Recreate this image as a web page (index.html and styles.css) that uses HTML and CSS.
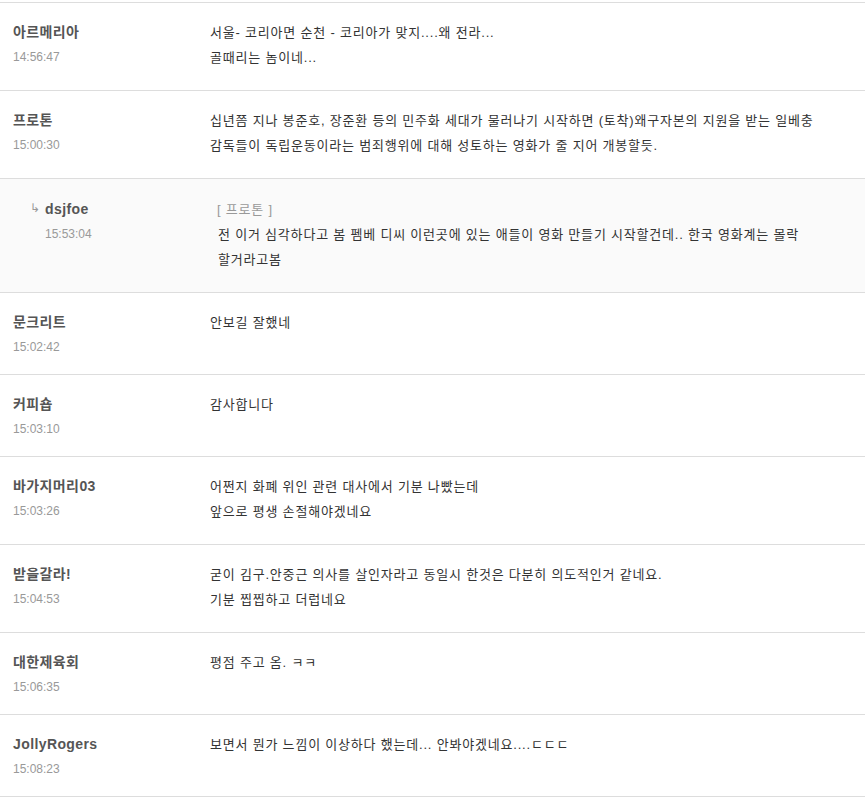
FILE: index.html
```html
<!DOCTYPE html>
<html lang="ko">
<head>
  <meta charset="UTF-8">
  <title>댓글</title>
  <link rel="stylesheet" href="styles.css">
</head>
<body>

  <ul class="comments">
    <li class="comment">
      <div class="author">
        <div class="name">아르메리아</div>
        <div class="time">14:56:47</div>
      </div>
      <div class="text">서울- 코리아면 순천 - 코리아가 맞지....왜 전라...<br>골때리는 놈이네...</div>
    </li>

    <li class="comment">
      <div class="author">
        <div class="name">프로톤</div>
        <div class="time">15:00:30</div>
      </div>
      <div class="text">십년쯤 지나 봉준호, 장준환 등의 민주화 세대가 물러나기 시작하면 (토착)왜구자본의 지원을 받는 일베충 감독들이 독립운동이라는 범죄행위에 대해 성토하는 영화가 줄 지어 개봉할듯.</div>
    </li>

    <li class="comment reply">
      <div class="author">
        <span class="arrow">↳</span>
        <div>
          <div class="name">dsjfoe</div>
          <div class="time">15:53:04</div>
        </div>
      </div>
      <div class="text">
        <div class="to">[ 프로톤 ]</div>
        전 이거 심각하다고 봄 펨베 디씨 이런곳에 있는 애들이 영화 만들기 시작할건데.. 한국 영화계는 몰락 할거라고봄
      </div>
    </li>

    <li class="comment">
      <div class="author">
        <div class="name">문크리트</div>
        <div class="time">15:02:42</div>
      </div>
      <div class="text">안보길 잘했네</div>
    </li>

    <li class="comment">
      <div class="author">
        <div class="name">커피숍</div>
        <div class="time">15:03:10</div>
      </div>
      <div class="text">감사합니다</div>
    </li>

    <li class="comment">
      <div class="author">
        <div class="name">바가지머리03</div>
        <div class="time">15:03:26</div>
      </div>
      <div class="text">어쩐지 화폐 위인 관련 대사에서 기분 나빴는데<br>앞으로 평생 손절해야겠네요</div>
    </li>

    <li class="comment">
      <div class="author">
        <div class="name">받을갈라!</div>
        <div class="time">15:04:53</div>
      </div>
      <div class="text">굳이 김구.안중근 의사를 살인자라고 동일시 한것은 다분히 의도적인거 같네요.<br>기분 찝찝하고 더럽네요</div>
    </li>

    <li class="comment">
      <div class="author">
        <div class="name">대한제육회</div>
        <div class="time">15:06:35</div>
      </div>
      <div class="text">평점 주고 옴. ㅋㅋ</div>
    </li>

    <li class="comment">
      <div class="author">
        <div class="name">JollyRogers</div>
        <div class="time">15:08:23</div>
      </div>
      <div class="text">보면서 뭔가 느낌이 이상하다 했는데... 안봐야겠네요....ㄷㄷㄷ</div>
    </li>
  </ul>

</body>
</html>
```

FILE: styles.css
```css
body {
  margin: 0;
  font-family: "Liberation Sans", "Noto Sans CJK KR", sans-serif;
  color: #333;
  background: #fff;
}

.comments {
  list-style: none;
  margin: 2px 0 0;
  padding: 0;
  border-top: 1px solid #ddd;
}

.comment {
  display: flex;
  padding: 17px 20px 20px 13px;
  border-bottom: 1px solid #ddd;
}

.author {
  width: 197px;
  flex-shrink: 0;
}

.name {
  font-size: 14px;
  font-weight: bold;
  line-height: 25px;
  letter-spacing: 0.4px;
  color: #555;
}

.time {
  margin-top: 5px;
  font-size: 12px;
  line-height: 14px;
  color: #999;
}

.text {
  width: 635px;
  font-size: 13px;
  line-height: 25px;
  letter-spacing: 0.8px;
  word-break: keep-all;
}

.reply {
  padding-top: 18px;
  background-color: #fafafa;
}

.reply .author {
  display: flex;
  width: 187px;
  padding-left: 17px;
}

.arrow {
  width: 15px;
  font-size: 12px;
  line-height: 22px;
  color: #999;
}

.reply .text {
  padding-left: 1px;
}

.to {
  margin-left: -1px;
  color: #999;
}
```
